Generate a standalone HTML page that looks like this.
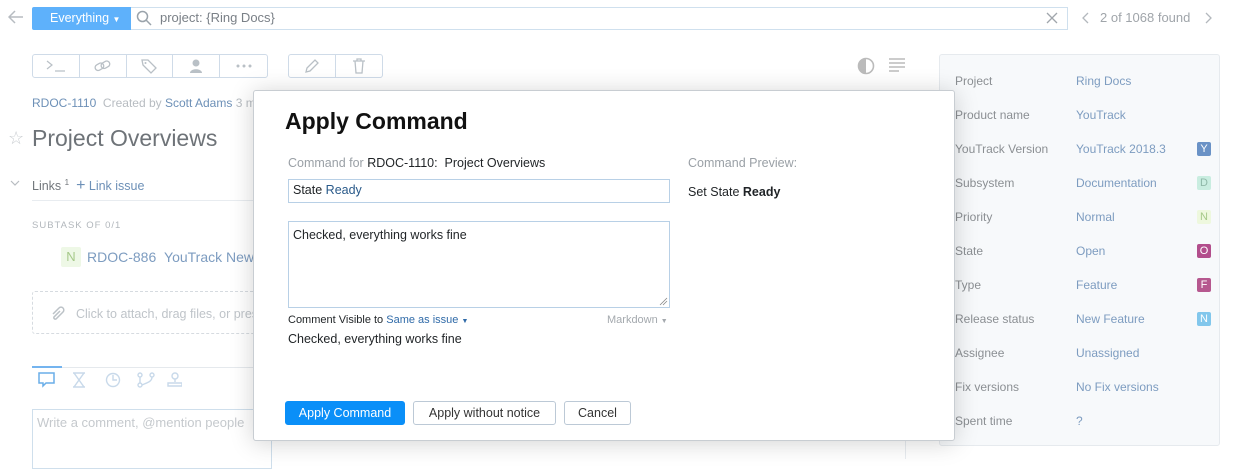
<!DOCTYPE html>
<html><head><meta charset="utf-8"><style>
*{box-sizing:border-box;margin:0;padding:0}
body{width:1252px;height:459px;overflow:hidden;background:#fff;font-family:"Liberation Sans",sans-serif;font-size:13px;color:#1f2326;position:relative}
.a{position:absolute;white-space:nowrap}
.lnk{color:#6d90b7}
.g{color:#9aa0a6}
.tb{position:absolute;top:54px;height:24px;border:1px solid #cfdbe8;border-radius:3px;display:flex}
.tb div{width:47px;border-right:1px solid #cfdbe8;display:flex;align-items:center;justify-content:center;color:#b9c0c6}
.tb div:last-child{border-right:none}
.row{position:absolute;left:955px;width:260px;white-space:nowrap;font-size:12px;color:#8b8f93}
.row span{position:absolute;left:121px;top:0;color:#7d9cc0}
.bd{position:absolute;left:242px;top:0;width:14px;height:14px;font-size:11px;text-align:center;line-height:14px;border-radius:2px;color:#fff}
.btn{position:absolute;top:401px;height:24px;border:1px solid #bcc9d6;border-radius:3px;font-size:12.5px;text-align:center;line-height:22px;color:#333}
</style></head><body>
<!-- top bar -->
<svg class="a" style="left:8px;top:10px" width="16" height="14"><path d="M15 7H2M7 1L1 7l6 6" fill="none" stroke="#b7bcc1" stroke-width="1.5"/></svg>
<div class="a" style="left:32px;top:7px;width:99px;height:23px;background:#5eb1fb;border-radius:2px 0 0 2px;color:#fff;font-size:12.5px;line-height:23px;padding-left:18px">Everything <span style="font-size:8px">▼</span></div>
<div class="a" style="left:131px;top:7px;width:937px;height:23px;border:1px solid #cfe0ee;border-left:none"></div>
<svg class="a" style="left:136px;top:10px" width="16" height="16"><circle cx="6.5" cy="6.5" r="5" fill="none" stroke="#9aa3ab" stroke-width="1.5"/><path d="M10 10l5 5" stroke="#9aa3ab" stroke-width="1.5"/></svg>
<div class="a" style="left:160px;top:10px;color:#7a8087;font-size:13px">project: {Ring Docs}</div>
<svg class="a" style="left:1046px;top:12px" width="12" height="12"><path d="M1 1l10 10M11 1L1 11" stroke="#a0a6ac" stroke-width="1.3"/></svg>
<svg class="a" style="left:1082px;top:12px" width="8" height="12"><path d="M6 1L1 6l5 5" fill="none" stroke="#b3b8bd" stroke-width="1.3"/></svg>
<div class="a" style="left:1100px;top:10px;color:#a0a5aa;font-size:13px">2 of 1068 found</div>
<svg class="a" style="left:1204px;top:12px" width="8" height="12"><path d="M2 1l5 5-5 5" fill="none" stroke="#b3b8bd" stroke-width="1.3"/></svg>
<!-- toolbar -->
<div class="tb" style="left:32px;width:236px">
<div><svg width="20" height="12"><path d="M1 1l5 4-5 4M9 11h10" fill="none" stroke="#b9c0c6" stroke-width="1.2"/></svg></div>
<div><svg width="18" height="14"><rect x="1" y="5" width="9" height="6" rx="3" fill="none" stroke="#b9c0c6" stroke-width="1.3" transform="rotate(-30 5 8)"/><rect x="7" y="3" width="9" height="6" rx="3" fill="none" stroke="#b9c0c6" stroke-width="1.3" transform="rotate(-30 11 6)"/></svg></div>
<div><svg width="16" height="16"><path d="M1 2h6l8 8-5 5-8-8z" fill="none" stroke="#b9c0c6" stroke-width="1.3"/><circle cx="4.5" cy="5" r="1" fill="#b9c0c6"/></svg></div>
<div><svg width="16" height="16"><circle cx="8" cy="5" r="3.5" fill="#b9c0c6"/><path d="M2 15c0-5 12-5 12 0z" fill="#b9c0c6"/></svg></div>
<div><svg width="18" height="4"><circle cx="3" cy="2" r="1.5" fill="#b9c0c6"/><circle cx="9" cy="2" r="1.5" fill="#b9c0c6"/><circle cx="15" cy="2" r="1.5" fill="#b9c0c6"/></svg></div>
</div>
<div class="tb" style="left:288px;width:95px">
<div><svg width="16" height="16"><path d="M2 14l1-4 8-8 3 3-8 8z" fill="none" stroke="#b9c0c6" stroke-width="1.3"/></svg></div>
<div><svg width="14" height="16"><path d="M1 3h12M5 3V1h4v2M3 3l1 12h6l1-12" fill="none" stroke="#b9c0c6" stroke-width="1.3"/></svg></div>
</div>
<svg class="a" style="left:857px;top:57px" width="18" height="18"><circle cx="9" cy="9" r="7.5" fill="none" stroke="#bbb" stroke-width="1.6"/><path d="M9 1.5a7.5 7.5 0 0 0 0 15z" fill="#bbb"/></svg>
<svg class="a" style="left:889px;top:58px" width="18" height="16"><path d="M0 1h16M0 5h16M0 9h16M0 13h10" stroke="#bbb" stroke-width="1.5"/></svg>
<!-- left content -->
<div class="a" style="left:32px;top:96px;font-size:12px"><span class="lnk">RDOC-1110</span> <span style="color:#b7bcc1">&nbsp;Created by</span> <span class="lnk">Scott Adams</span> <span style="color:#b7bcc1">3 m</span></div>
<div class="a" style="left:8px;top:128px;color:#c9cdd1;font-size:18px">☆</div>
<div class="a" style="left:32px;top:125px;font-size:23px;color:#6e7378">Project Overviews</div>
<svg class="a" style="left:10px;top:180px" width="10" height="6"><path d="M1 1l4 4 4-4" fill="none" stroke="#b7bcc1" stroke-width="1.2"/></svg>
<div class="a" style="left:32px;top:177px;font-size:12.5px;color:#72777c">Links <sup style="font-size:8px">1</sup> &nbsp;<span class="lnk"><b style="font-size:16px;font-weight:normal">+</b> Link issue</span></div>
<div class="a" style="left:32px;top:200px;width:230px;height:1px;background:#e8ecf0"></div>
<div class="a" style="left:32px;top:220px;font-size:9.5px;letter-spacing:1px;color:#b2b7bc">SUBTASK OF 0/1</div>
<div class="a" style="left:61px;top:247px;width:20px;height:20px;background:#eef8e6;color:#a6c98a;text-align:center;line-height:20px;border-radius:2px">N</div>
<div class="a" style="left:87px;top:249px;font-size:14px;color:#7d9cc0">RDOC-886 &nbsp;YouTrack New I</div>
<div class="a" style="left:32px;top:291px;width:240px;height:43px;border:1px dashed #d6dbe0;border-radius:3px"></div>
<svg class="a" style="left:49px;top:305px" width="16" height="16"><path d="M4 9l6-6a2.5 2.5 0 0 1 4 4l-7 7a1.5 1.5 0 0 1-2-2l6-6" fill="none" stroke="#bcc2c7" stroke-width="1.5"/></svg>
<div class="a" style="left:76px;top:307px;color:#bfc4c9;font-size:12.5px">Click to attach, drag files, or press</div>
<div class="a" style="left:32px;top:367px;width:230px;height:1px;background:#e5e9ed"></div>
<div class="a" style="left:32px;top:366px;width:30px;height:2px;background:#74b4ef"></div>
<svg class="a" style="left:38px;top:372px" width="18" height="16"><path d="M1 1h15v10H8l-3 3v-3H1z" fill="none" stroke="#6aaee8" stroke-width="1.5"/></svg>
<svg class="a" style="left:72px;top:372px" width="110" height="16" fill="none" stroke="#c8d9ea" stroke-width="1.4"><path d="M1 1h12M1 15h12M2 1l10 14M12 1L2 15"/><circle cx="41" cy="8" r="6.5"/><path d="M41 3v5h4"/><circle cx="68" cy="3" r="2"/><circle cx="80" cy="3" r="2"/><circle cx="68" cy="13" r="2"/><path d="M68 5v6M80 5c0 5-6 6-10 8"/><circle cx="103" cy="4" r="3"/><path d="M103 7v3M96 11h14v3H96z"/></svg>
<div class="a" style="left:32px;top:409px;width:240px;height:60px;border:1px solid #cfdfec"></div>
<div class="a" style="left:37px;top:415px;color:#c5c9cd;font-size:13px">Write a comment, @mention people</div>
<div class="a" style="left:905px;top:90px;width:1px;height:369px;background:#e8ecf0"></div>
<!-- sidebar -->
<div class="a" style="left:939px;top:54px;width:281px;height:392px;background:#f7f9fb;border:1px solid #e6eaee;border-radius:3px"></div>
<div class="row" style="top:74px">Project<span>Ring Docs</span></div>
<div class="row" style="top:108px">Product name<span>YouTrack</span></div>
<div class="row" style="top:142px">YouTrack Version<span>YouTrack 2018.3</span><div class="bd" style="background:#6a92c6">Y</div></div>
<div class="row" style="top:176px">Subsystem<span>Documentation</span><div class="bd" style="background:#c9ede0;color:#8fb8a8">D</div></div>
<div class="row" style="top:210px">Priority<span>Normal</span><div class="bd" style="background:#eef8de;color:#a6c98a">N</div></div>
<div class="row" style="top:244px">State<span>Open</span><div class="bd" style="background:#b24e8c">O</div></div>
<div class="row" style="top:278px">Type<span>Feature</span><div class="bd" style="background:#b6588f">F</div></div>
<div class="row" style="top:312px">Release status<span>New Feature</span><div class="bd" style="background:#82c7ec">N</div></div>
<div class="row" style="top:346px">Assignee<span>Unassigned</span></div>
<div class="row" style="top:380px">Fix versions<span>No Fix versions</span></div>
<div class="row" style="top:414px">Spent time<span>?</span></div>
<!-- modal -->
<div class="a" style="left:253px;top:90px;width:702px;height:351px;background:#fff;border:1px solid #c8cdd2;border-radius:3px;box-shadow:0 2px 24px rgba(0,0,0,0.18)"></div>
<div class="a" style="left:285px;top:108px;font-size:23px;font-weight:bold;color:#111">Apply Command</div>
<div class="a" style="left:288px;top:156px;font-size:12.5px"><span class="g">Command for</span> RDOC-1110:&nbsp; Project Overviews</div>
<div class="a" style="left:688px;top:156px;font-size:12.5px" ><span class="g">Command Preview:</span></div>
<div class="a" style="left:688px;top:185px;font-size:12.5px">Set State <b>Ready</b></div>
<div class="a" style="left:288px;top:179px;width:382px;height:24px;border:1px solid #b8d0e6;padding:3px 4px;font-size:12.5px">State <span style="color:#2a5a8a">Ready</span></div>
<div class="a" style="left:288px;top:221px;width:382px;height:87px;border:1px solid #b8d0e6;padding:6px 4px;font-size:12.5px">Checked, everything works fine</div>
<svg class="a" style="left:659px;top:297px" width="9" height="9"><path d="M1 8L8 1M4 8L8 4" stroke="#888" stroke-width="0.8"/></svg>
<div class="a" style="left:288px;top:314px;font-size:11px">Comment Visible to <span style="color:#2f6aa8">Same as issue</span> <span style="font-size:7px;color:#2f6aa8">▼</span></div>
<div class="a" style="left:607px;top:314px;font-size:11px;color:#a4a9ae">Markdown <span style="font-size:7px">▼</span></div>
<div class="a" style="left:288px;top:332px;font-size:12.5px">Checked, everything works fine</div>
<div class="btn" style="left:285px;width:120px;background:#0a8ff8;border-color:#0a8ff8;color:#fff">Apply Command</div>
<div class="btn" style="left:413px;width:143px">Apply without notice</div>
<div class="btn" style="left:564px;width:67px">Cancel</div>
</body></html>
